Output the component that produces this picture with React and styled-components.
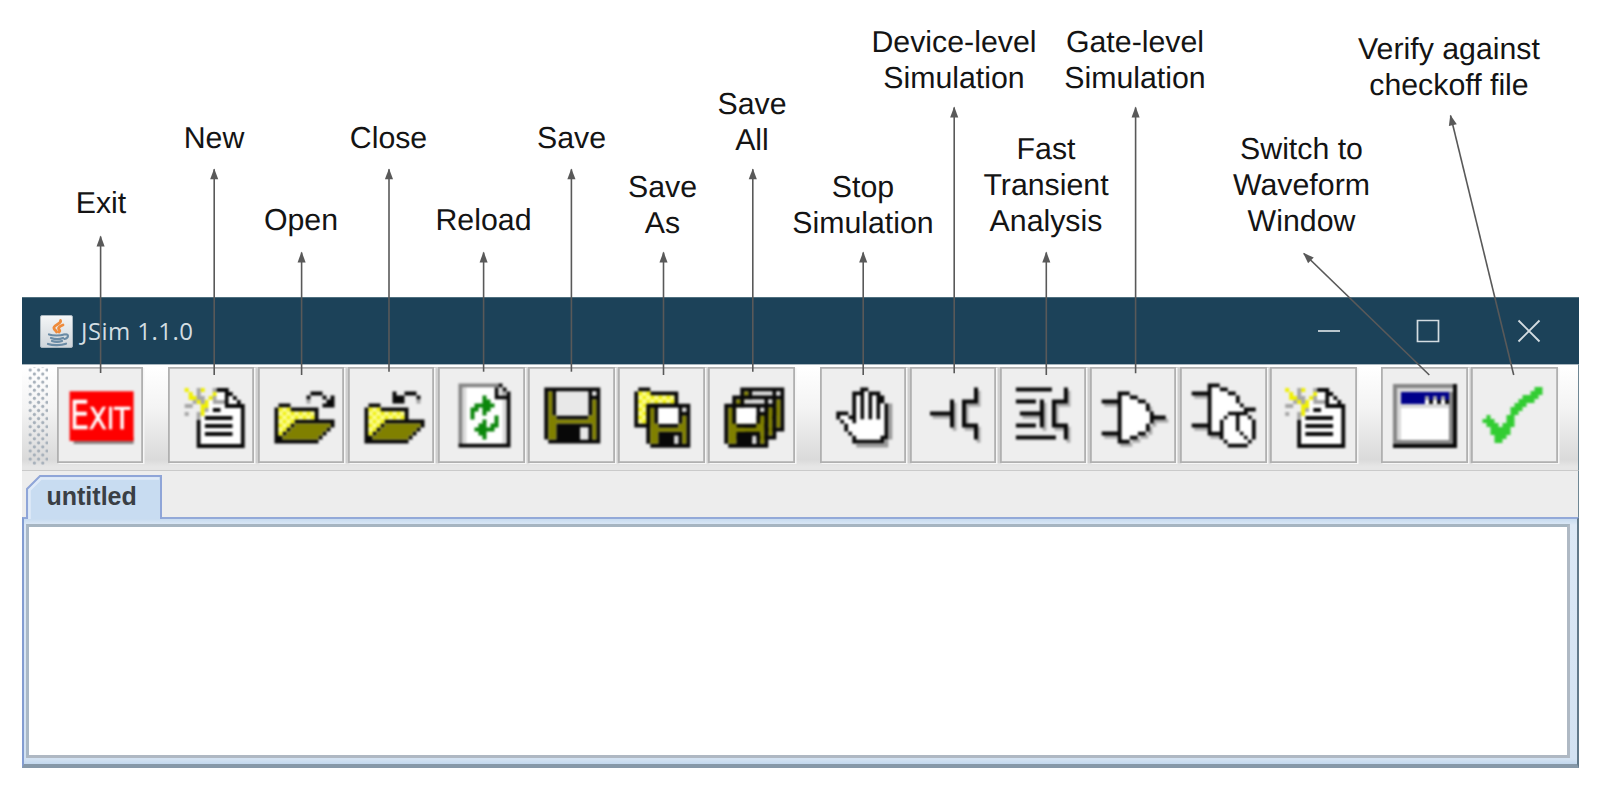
import React from 'react';
import styled, { createGlobalStyle } from 'styled-components';

const GlobalStyle = createGlobalStyle`
  body { margin: 0; background: #fff; overflow: hidden; }
  * { box-sizing: border-box; }
`;

const Page = styled.main`
  position: relative;
  width: 1610px;
  height: 788px;
  padding: 297px 0 0 22px;
  background: #fff;
`;

const AppWindow = styled.section`
  display: flex;
  flex-direction: column;
  width: 1557px;
  height: 471px;
`;

const TitleBar = styled.header`
  display: flex;
  align-items: center;
  height: 67px;
  padding: 0 38px 0 18px;
  background: #1c4259;
  border-top: 1px solid #50707f;
`;

const Title = styled.h1`
  flex: 1;
  margin: 0 0 0 8px;
  font: 400 24px/32px 'Open Sans', 'Noto Sans', sans-serif;
  letter-spacing: 0.45px;
  color: #d3dde2;
`;

const WindowControls = styled.div`
  display: flex;
  gap: 77.5px;
`;

const ControlIcon = styled.svg`
  display: block;
  margin-left: ${(p) => p.$nudge || 0}px;
`;

const Toolbar = styled.nav`
  display: flex;
  align-items: flex-start;
  height: 107px;
  padding: 1.7px 0 0 6px;
  background: linear-gradient(#fff 3%, #f4f4f4 40%, #dadada 90%, #e6e6e6 97%);
  border-top: 1px solid #a9b7bf;
  border-bottom: 1.5px solid #cacaca;
  border-right: 1.5px solid #6f8794;
`;

const Grip = styled.div`
  flex: none;
  width: 20px;
  height: 98px;
  margin-right: 8.5px;
  background-image: radial-gradient(circle, #a6b0ba 1.1px, transparent 2.1px),
    radial-gradient(circle, #a6b0ba 1.1px, transparent 2.1px);
  background-size: 8.4px 8.1px;
  background-position: -2px -1px, 2.2px 3px;
`;

const ButtonGroup = styled.div`
  display: flex;
  flex: none;
  gap: 3.65px;
  margin-right: 24.6px;
  background: #cfcfcf;

  &:last-child { margin-right: 0; }
`;

const ToolButton = styled.button`
  display: block;
  width: 86.5px;
  height: 96.5px;
  padding: 0;
  border: 0;
  background: #eee;
  box-shadow: inset 0 0 0 1.8px #b0b0b0, 1.5px 1px 0 #f6f6f6;
`;

const Icon = styled.svg`
  display: block;
  width: 86.5px;
  height: 96.5px;
  filter: blur(1.1px);
`;

const TabStrip = styled.div`
  display: flex;
  align-items: flex-end;
  height: 46px;
  padding-left: 4px;
  background: #ededed;
  border-right: 1.5px solid #6f8794;
`;

const Tab = styled.div`
  position: relative;
  width: 136px;
  height: 42px;
  padding: 6px 0 0 20.5px;
  font: 700 25px/30px 'Liberation Sans', Arial, sans-serif;
  color: #3a3f45;
`;

const TabShape = styled.svg`
  position: absolute;
  inset: 0;
`;

const TabText = styled.span`
  position: relative;
`;

const EditorFrame = styled.div`
  flex: 1;
  display: flex;
  padding: 5px 7px 6px 2px;
  background: linear-gradient(#c8dcf0, #dce8f6 6px, #d3e2f2 240px, #c3d8ee);
  border: solid;
  border-width: 2px 2px 4px 2px;
  border-color: #93a9d8 #62798a #8698a8 #829cd1;
`;

const Editor = styled.div`
  flex: 1;
  background: #fff;
  border: solid;
  border-width: 3px 3px 3px 3px;
  border-color: #a6b5c1 #afb9c4 #afb8c3 #a9b8c6;
`;

const Arrows = styled.svg`
  position: absolute;
  left: 0;
  top: 0;
  pointer-events: none;
`;

const Label = styled.div`
  position: absolute;
  left: ${(p) => p.$x}px;
  top: ${(p) => p.$base - 27.2}px;
  transform: translateX(-50%);
  font: 400 30.3px/36px 'Liberation Sans', Arial, sans-serif;
  text-rendering: geometricPrecision;
  text-align: center;
  white-space: pre;
  color: #141414;
`;

const PALETTE = {
  K: '#080808', O: '#808000', W: '#fff', w: '#fff', Y: '#f0f000', y: '#fdfd82',
  g: '#a5a5a5', l: '#d8d8d8', D: '#858585', N: '#00008b', G: '#0b870b', C: '#32cd32', s: '#999', e: '#e8e8e8',
};

function Pixels({ rows, x = 0, y = 0, tint }) {
  const paths = {};
  rows.forEach((row, j) => {
    let i = 0;
    while (i < row.length) {
      const c = row[i];
      let n = 1;
      while (row[i + n] === c) n += 1;
      if (c !== '.') paths[c] = (paths[c] || '') + `M${i} ${j}h${n}v1h${-n}z`;
      i += n;
    }
  });
  return (
    <g transform={`translate(${x} ${y}) scale(4)`}>
      {Object.entries(paths).map(([c, d]) => (
        <path key={c} d={d} fill={tint || PALETTE[c]} />
      ))}
    </g>
  );
}

const NEW = [
  'Y..gY..gKKK....',
  '.Y.g...YwwKK...',
  '.YYgg.YgwwKwK..',
  '..gYgYwgggKwwK.',
  'gg..YYwwwwKKKKK',
  '....YgwKKwwwwwK',
  'g..gYwwwwwwwwwK',
  '...gwKKKKKKKwwK',
  '...KwwwwwwwwwwK',
  '...KwKKKKKKKwwK',
  '...KwwwwwwwwwwK',
  '...KwKKKKKKKwwK',
  '...KwwwwwwwwwwK',
  '...KwwwwwwwwwwK',
  '...KKKKKKKKKKKK',
];

const FOLDER = [
  '.KKK...........',
  'KYyYKKKKKKK....',
  'KyYyYyYyYyK....',
  'KYyYyYyYyYK....',
  'KyYyYKKKKKKKKKK',
  'KYyYKOOOOOOOOOK',
  'KyYKOOOOOOOOOK.',
  'KYKOOOOOOOOOK..',
  'KKOOOOOOOOOK...',
  'KKKKKKKKKKK....',
];
const OPEN = [
  '.........KKK...',
  '........K...K.K',
  '........g....KK',
  '.KKK........KKK',
  ...FOLDER.slice(1),
];
const CLOSE = [
  '.......K..KKK..',
  '.......KKK...K.',
  '.......KKK...g.',
  ...FOLDER,
];

const RELOAD = [
  'DDDDDDDDDDK..',
  'DlwwwwwwwKlK.',
  'DlwwwwwwwKlgK',
  'DlwwwwGwwKKKK',
  'DlwwwwGGwwwlK',
  'DlwwGGGGGwwlK',
  'DlwGGwGGwwwlK',
  'DlwGwwGwwwwlK',
  'DlwGwwwwwGwlK',
  'DlwwwwGwwGwlK',
  'DlwwwGGwGGwlK',
  'DlwwGGGGGwwlK',
  'DlwwwGGwwwwlK',
  'DlwwwwGwwwwlK',
  'DlwwwwwwwwwlK',
  'KKKKKKKKKKKKK',
];

const SAVE = [
  'KKKKKKKKKKKKKK',
  'KOKeeeeeeeeKeK',
  'KOKeeeeeeeeKKK',
  'KOKeeeeeeeeKOK',
  'KOKeeeeeeeeKOK',
  'KOKeeeeeeeeKOK',
  'KOKeeeeeeeeKOK',
  'KOOKKKKKKKKOOK',
  'KOOOOOOOOOOOOK',
  'KOOKKKKKKKKKOK',
  'KOOKKKKKKeeKOK',
  'KOOKKKKKKeeKOK',
  'KOOKKKKKKeeKOK',
  '.KKKKKKKKKKKKK',
];
const SMALL_DISK = [
  'KKKKKKKKKKK',
  'KOKWWWWWKlK',
  'KOKWWWWWKKK',
  'KOKWWWWWKOK',
  'KOKWWWWWKOK',
  'KOOKKKKKOOK',
  'KOOOOOOOOOK',
  'KOOKKKKKKOK',
  'KOOKKKKlKOK',
  'KOOKKKKlKOK',
  '.KKKKKKKKKK',
];
const BACK_DISK = SMALL_DISK.map((r) => r.replace(/W/g, 'l'));
const BACK_FOLDER = [
  '.KKK.......',
  'KYyYKKKKKKK',
  'KyYyYyYyYyK',
  'KYyYyYyYyYK',
  'KyYyKKKKKKK',
  'KYyYK......',
  'KyYyK......',
  'KYyYK......',
  'KyYyK......',
  'KKKK.......',
];

const HAND = [
  '......KK......',
  '....KKKwKKK...',
  '....KwKwKwKK..',
  '....KwKwKwKK..',
  '....KwKwKwKwKs',
  '....KwKwKwKwKs',
  'KKK.KwKwKwKwKs',
  'KwwKKwKwKwKwKs',
  '.KwwKwwwwwwwKs',
  '..KwwwwwwwwwKs',
  '..KwwwwwwwwwKs',
  '...KwwwwwwwwKs',
  '....KwwwwwwKKs',
  '....KKKKKKKKs.',
  '.....ssssssss.',
];

const FET = [
  '...........K',
  '...........K',
  '...........K',
  '.....K..KKKK',
  '.....K..K...',
  '.....K..K...',
  'KKKKKK..K...',
  '.....K..K...',
  '.....K..K...',
  '.....K..KKKK',
  '...........K',
  '...........K',
  '...........K',
];
const FAST_LINES = [
  'KKKKKKKKK.', '', '', 'KKKKK', '', '', '', '', '', 'KKKKK', '', '', 'KKKKKKKKKK',
];

const GATE = [
  '....KKK',
  '....KwwKK',
  'KKKKKwwwwKK',
  '....KwwwwwwK',
  '....KwwwwwwK',
  '....KwwwwwwwK',
  '....KwwwwwwwKKKK',
  '....KwwwwwwwK',
  '....KwwwwwwK',
  '....KwwwwwwK',
  'KKKKKwwwwKK',
  '....KwwKK',
  '....KKK',
];
const GATE_TIMER = [
  '....KKK.........',
  '....KwwKK.......',
  'KKKKKwwwwKK.....',
  '....KwwwwwwK....',
  '....KwwwwwwK....',
  '....KwwwwwwwK...',
  '....KwwwwwwwwKKK',
  '....KwwwwKKKKK..',
  '....KwwwKwwKwwK.',
  '....KwwKwwwKwwwK',
  'KKKKKwwKwwwKwwwK',
  '....KwwKwwwKwwwK',
  '....KKKKwwwwKwwK',
  '.......KwwwwwKwK',
  '........KwwwwwK.',
  '.........KKKKK..',
];
const TIMER_LEADS = ['', '', 'KKKK', '', '', '', '', '', '', '', 'KKKK', '', '....KKK'];

const FRAME = [
  'DDDDDDDDDDDDDDDK',
  'DllllllllllllllK',
  'DlNNNNNNNNNNNNDK',
  'DlNNNNNNgNgNgNDK',
  'DlNNNNNNwKwKwKDK',
  'DlllllllllllllDK',
  ...Array(8).fill('DlwwwwwwwwwwwwDK'),
  'DDDDDDDDDDDDDDDK',
  'KKKKKKKKKKKKKKKK',
];

const CHECK = [
  '.............CC',
  '............CCC',
  '..........CCCC.',
  '.........CCCC..',
  '........CCC....',
  '.......CCC.....',
  '.......CC......',
  '.C....CC.......',
  'CCC...CC.......',
  '.CCC.CCC.......',
  '..CCCCC........',
  '..CCCCC........',
  '...CCC.........',
  '...CC..........',
];

function Shadowed({ rows, shadow = rows, x, y }) {
  return (
    <>
      <Pixels rows={shadow.map((r) => r.replace(/w/g, '.'))} x={x + 2.6} y={y + 3.2} tint="#ababab" />
      <Pixels rows={rows} x={x} y={y} />
    </>
  );
}

function ExitSign() {
  return (
    <>
      <rect x="16.6" y="70" width="60" height="7" fill="#8a8080" />
      <rect x="12.6" y="24.3" width="64" height="49.7" fill="#f00" />
      <text
        x="13"
        y="62"
        fontFamily="'DejaVu Sans Condensed', 'DejaVu Sans', sans-serif"
        fontSize="39"
        fill="#fff"
        stroke="#fff"
        strokeWidth="0.7"
        textLength="60"
        lengthAdjust="spacingAndGlyphs"
      >
        E<tspan fontSize="30" fontFamily="'DejaVu Sans', sans-serif">XIT</tspan>
      </text>
    </>
  );
}

const GROUPS = [
  [{ name: 'Exit', art: <ExitSign /> }],
  [
    { name: 'New', art: <Pixels rows={NEW} x={16.7} y={21} /> },
    { name: 'Open', art: <Pixels rows={OPEN} x={16.5} y={24.6} /> },
    { name: 'Close', art: <Pixels rows={CLOSE} x={16.5} y={24.6} /> },
    { name: 'Reload', art: <Pixels rows={RELOAD} x={20.5} y={16.6} /> },
    { name: 'Save', art: <Pixels rows={SAVE} x={16.3} y={20.6} /> },
    {
      name: 'Save As',
      art: (
        <>
          <Pixels rows={BACK_FOLDER} x={16.3} y={20.6} />
          <Pixels rows={SMALL_DISK} x={28.3} y={36.8} />
        </>
      ),
    },
    {
      name: 'Save All',
      art: (
        <>
          <Pixels rows={BACK_DISK} x={32.3} y={20.6} />
          <Pixels rows={BACK_DISK} x={24.3} y={28.6} />
          <Pixels rows={SMALL_DISK} x={16.3} y={36.8} />
        </>
      ),
    },
  ],
  [
    { name: 'Stop', art: <Pixels rows={HAND} x={16.3} y={20.4} /> },
    { name: 'Device-level', art: <Shadowed rows={FET} x={20} y={20.6} /> },
    {
      name: 'Fast transient',
      art: (
        <>
          <Shadowed rows={FET} x={19.9} y={20.6} />
          <Pixels rows={FAST_LINES} x={15.9} y={20.6} />
        </>
      ),
    },
    { name: 'Gate-level', art: <Shadowed rows={GATE} x={11.7} y={24.6} /> },
    { name: 'Gate timing', art: <Shadowed rows={GATE_TIMER} shadow={TIMER_LEADS} x={11.7} y={16.6} /> },
    { name: 'Report', art: <Pixels rows={NEW} x={15.2} y={21} /> },
  ],
  [
    { name: 'Waveform', art: <Pixels rows={FRAME} x={12} y={17} /> },
    { name: 'Verify', art: <Pixels rows={CHECK} x={11.5} y={20} /> },
  ],
];

const LABELS = [
  [101, 213.5, 'Exit'],
  [214, 148, 'New'],
  [301, 230.5, 'Open'],
  [388.5, 148, 'Close'],
  [483.5, 230.5, 'Reload'],
  [571.5, 148, 'Save'],
  [662.5, 196.7, 'Save\nAs'],
  [752, 114, 'Save\nAll'],
  [863, 196.7, 'Stop\nSimulation'],
  [954, 52, 'Device-level\nSimulation'],
  [1046, 159, 'Fast\nTransient\nAnalysis'],
  [1135, 52, 'Gate-level\nSimulation'],
  [1301.5, 159, 'Switch to\nWaveform\nWindow'],
  [1449, 59.5, 'Verify against\ncheckoff file'],
];

const ARROWS = [
  [100.6, 236.5, 100.6, 373],
  [214.2, 169.3, 214.2, 375],
  [301.6, 252.5, 301.6, 375],
  [389, 169.3, 389, 371.7],
  [483.6, 252.5, 483.6, 371.7],
  [571.4, 169.3, 571.4, 371.7],
  [663.5, 252.5, 663.5, 375],
  [752.8, 169.3, 752.8, 371.7],
  [863.2, 252.5, 863.2, 375],
  [954.2, 107.5, 954.2, 373.3],
  [1046.3, 252.5, 1046.3, 375],
  [1135.6, 107.5, 1135.6, 373.3],
  [1303.8, 253.5, 1429.3, 375],
  [1450.5, 115.5, 1513.7, 375],
];

function JavaCup() {
  return (
    <svg width="33" height="33" viewBox="0 0 33 33">
      <defs>
        <linearGradient id="cupTile" x2="0" y2="1">
          <stop offset="0" stopColor="#f4f6f7" />
          <stop offset="1" stopColor="#cfd5da" />
        </linearGradient>
      </defs>
      <rect x="0.5" y="0.5" width="32" height="32" rx="1.5" fill="url(#cupTile)" stroke="#a9b7c0" />
      <g fill="none" strokeLinecap="round">
        <path d="M20.5 5.5c1.5 3.5-8 4.5-6.5 8 .6 1.7 2.5 2.2 2.5 3.5M23 10c-4 1.5-5.5 3-3.5 5 .6.8.2 1.5-.5 2" stroke="#ee8b3c" strokeWidth="2.8" />
        <path d="M9 19.5c3.5 1.3 12 1.3 15 0M25 19.5c4-1 4 3.5-.5 4.5M11 23c3.5 1.2 9 1.2 12 0M12 26c3 1 7 1 10 0M8 29c5 1.6 13 1.5 18-.3" stroke="#6a8ba5" strokeWidth="2.2" />
      </g>
    </svg>
  );
}

export default function App() {
  return (
    <Page>
      <GlobalStyle />
      <AppWindow>
        <TitleBar>
          <JavaCup />
          <Title>JSim 1.1.0</Title>
          <WindowControls>
            <ControlIcon width="24" height="24" viewBox="0 0 24 24" stroke="#b9c6cd" strokeWidth="2">
              <path d="M1 12h22" />
            </ControlIcon>
            <ControlIcon $nudge={-3} width="24" height="24" viewBox="0 0 24 24" stroke="#d3dce1" strokeWidth="1.7" fill="none">
              <path d="M1.5 1.5h21v21h-21z" />
            </ControlIcon>
            <ControlIcon width="24" height="24" viewBox="0 0 24 24" stroke="#d3dce1" strokeWidth="1.9">
              <path d="M1.5 1.5l21 21M22.5 1.5l-21 21" />
            </ControlIcon>
          </WindowControls>
        </TitleBar>
        <Toolbar>
          <Grip />
          {GROUPS.map((group) => (
            <ButtonGroup key={group[0].name}>
              {group.map(({ name, art }) => (
                <ToolButton key={name} aria-label={name}>
                  <Icon viewBox="0 0 86.5 96.5">{art}</Icon>
                </ToolButton>
              ))}
            </ButtonGroup>
          ))}
        </Toolbar>
        <TabStrip>
          <Tab>
            <TabShape width="136" height="44" viewBox="0 0 136 44">
              <path d="M1 44V14L14 1H135V44" fill="#c8dcf1" stroke="#8fa5d8" strokeWidth="2" />
              <path d="M3.5 44V15L15 3.5H133" fill="none" stroke="#dfeaf8" strokeWidth="2.5" />
            </TabShape>
            <TabText>untitled</TabText>
          </Tab>
        </TabStrip>
        <EditorFrame>
          <Editor />
        </EditorFrame>
      </AppWindow>
      {LABELS.map(([x, base, text]) => (
        <Label key={text} $x={x} $base={base}>{text}</Label>
      ))}
      <Arrows width="1610" height="788">
        <defs>
          <marker id="head" viewBox="0 0 12 10" refX="1" refY="5" markerWidth="12" markerHeight="9" markerUnits="userSpaceOnUse" orient="auto">
            <path d="M0 5L12 0.5V9.5z" fill="#595959" />
          </marker>
        </defs>
        {ARROWS.map(([x1, y1, x2, y2]) => (
          <path key={x1} d={`M${x1} ${y1}L${x2} ${y2}`} stroke="#595959" strokeWidth="1.6" markerStart="url(#head)" />
        ))}
      </Arrows>
    </Page>
  );
}
